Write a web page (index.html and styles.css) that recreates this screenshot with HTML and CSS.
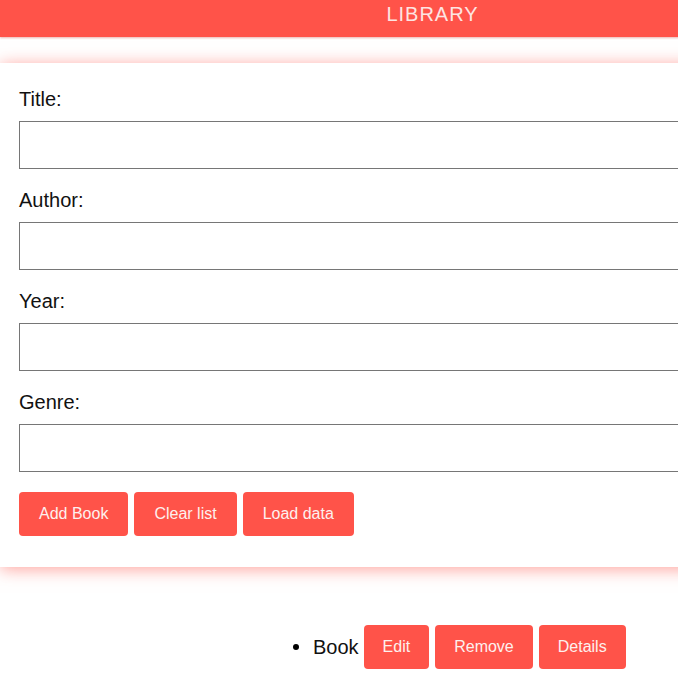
FILE: index.html
```html
<!DOCTYPE html>
<html lang="en">
<head>
<meta charset="utf-8">
<title>Library</title>
<link rel="stylesheet" href="styles.css">
</head>
<body>
<div class="page">
  <header class="header">LIBRARY</header>
  <form class="card">
    <label class="label" for="title">Title:</label>
    <input class="field" id="title" type="text">
    <label class="label" for="author">Author:</label>
    <input class="field" id="author" type="text">
    <label class="label" for="year">Year:</label>
    <input class="field" id="year" type="text">
    <label class="label" for="genre">Genre:</label>
    <input class="field" id="genre" type="text">
    <div class="actions">
      <button type="button" class="btn btn-wide">Add Book</button>
      <button type="button" class="btn btn-wide">Clear list</button>
      <button type="button" class="btn btn-wide">Load data</button>
    </div>
  </form>
  <ul class="books">
    <li class="book">
      <span class="bullet"></span>
      <span class="book-name">Book</span>
      <button type="button" class="btn">Edit</button>
      <button type="button" class="btn">Remove</button>
      <button type="button" class="btn">Details</button>
    </li>
  </ul>
</div>
</body>
</html>
```
FILE: styles.css
```css
html {
  overflow: hidden;
}
body {
  margin: 0;
  background: #fff;
  font-family: "Liberation Sans", Arial, sans-serif;
  color: #111;
}
.page {
  width: 865px;
}
.header {
  height: 37px;
  background: #ff5349;
  color: #fde4e2;
  font-size: 20px;
  letter-spacing: 1px;
  line-height: 28px;
  text-align: center;
  box-shadow: 0 1px 2px rgba(200, 40, 30, 0.35);
}
.card {
  margin-top: 26px;
  padding: 25px 19px 31px;
  display: flex;
  flex-direction: column;
  background: #fff;
  box-shadow: 0 2px 16px rgba(255, 83, 73, 0.55);
}
.label {
  font-size: 20px;
  line-height: 23px;
  margin-bottom: 10px;
}
.field {
  box-sizing: border-box;
  height: 48px;
  width: 100%;
  margin: 0 0 20px;
  border: 1px solid #767676;
  border-radius: 0;
  font-size: 16px;
}
.actions {
  display: flex;
  gap: 6px;
}
.btn {
  height: 44px;
  padding: 0 19px;
  border: none;
  border-radius: 4px;
  background: #ff5349;
  color: #fdf0ee;
  font-family: "Liberation Sans", Arial, sans-serif;
  font-size: 16px;
}
.btn-wide {
  padding: 0 20px;
}
.books {
  list-style: none;
  margin: 58px 0 0;
  padding: 0 0 0 293px;
}
.book {
  display: flex;
  align-items: center;
  gap: 6px;
}
.bullet {
  width: 6px;
  height: 6px;
  border-radius: 50%;
  background: #000;
  margin-right: 8px;
}
.book-name {
  font-size: 20px;
  color: #111;
  margin-right: -1px;
}
```
